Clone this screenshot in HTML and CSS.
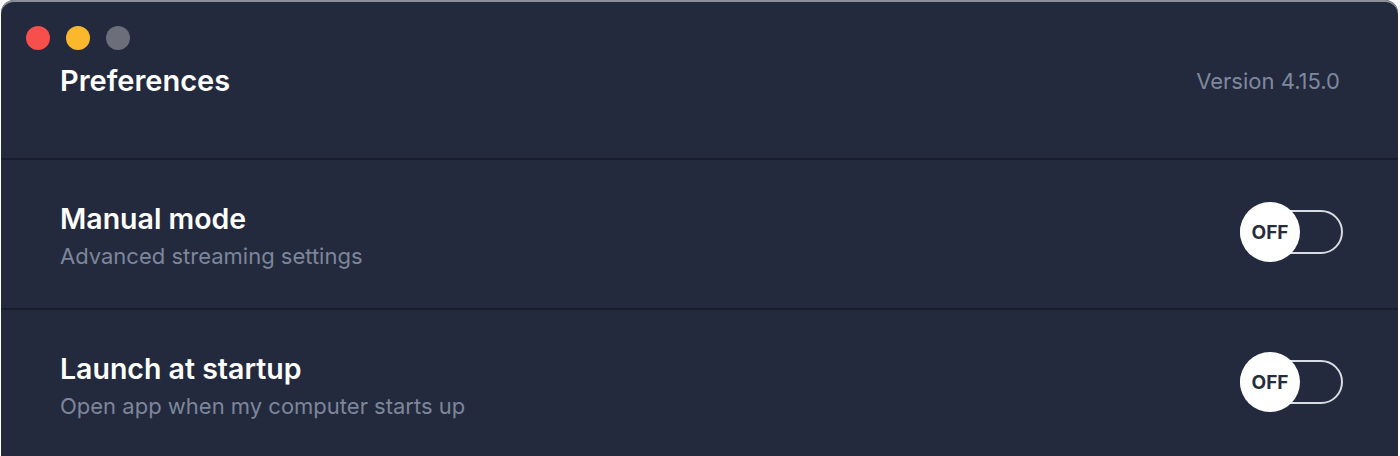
FILE: index.html
```html
<!DOCTYPE html>
<html lang="en">
<head>
<meta charset="utf-8">
<title>Preferences</title>
<link rel="stylesheet" href="styles.css">
</head>
<body>
<div class="window">
  <header class="header">
    <div class="lights">
      <span class="light red"></span>
      <span class="light yellow"></span>
      <span class="light gray"></span>
    </div>
    <div class="header-row">
      <h1 class="title">Preferences</h1>
      <span class="version">Version 4.15.0</span>
    </div>
  </header>
  <section class="row">
    <div class="text">
      <div class="row-title">Manual mode</div>
      <div class="row-sub">Advanced streaming settings</div>
    </div>
    <div class="toggle"><span class="knob">OFF</span></div>
  </section>
  <section class="row">
    <div class="text">
      <div class="row-title">Launch at startup</div>
      <div class="row-sub">Open app when my computer starts up</div>
    </div>
    <div class="toggle"><span class="knob">OFF</span></div>
  </section>
</div>
</body>
</html>
```
FILE: styles.css
```css
html, body {
  margin: 0;
  padding: 0;
  background: #ffffff;
  height: 100%;
  overflow: hidden;
}
body {
  font-family: Inter, "Noto Sans", sans-serif;
  padding: 0 2px 0 1px;
}
.window {
  background: #232a3d;
  border-radius: 13px 13px 0 0;
  box-shadow: inset 0 2px 0 #8c8f97;
  height: 456px;
  overflow: hidden;
}
.header {
  height: 160px;
  box-sizing: border-box;
  padding: 26px 58px 0 25px;
  border-bottom: 2px solid #191e2b;
}
.lights {
  display: flex;
  gap: 16px;
}
.light {
  width: 24px;
  height: 24px;
  border-radius: 50%;
}
.red { background: #f74f4b; }
.yellow { background: #fbb82c; }
.gray { background: #6c6f79; }
.header-row {
  display: flex;
  justify-content: space-between;
  align-items: center;
  margin-top: 13px;
  padding-left: 34px;
}
.title {
  margin: 0;
  font-size: 29px;
  font-weight: 600;
  line-height: 36px;
  color: #ffffff;
}
.version {
  font-size: 22px;
  color: #7f889e;
}
.row {
  height: 150px;
  box-sizing: border-box;
  border-bottom: 2px solid #191e2b;
  display: flex;
  align-items: center;
  justify-content: space-between;
  padding: 0 55px 4px 59px;
}
.text {
  display: flex;
  flex-direction: column;
  gap: 6px;
  padding-top: 6px;
}
.row-title {
  font-size: 28.5px;
  font-weight: 600;
  line-height: 36px;
  color: #ffffff;
}
.row-sub {
  font-size: 22px;
  line-height: 26px;
  color: #7d869b;
}
.toggle {
  width: 103px;
  height: 44px;
  box-sizing: border-box;
  border: 2px solid #d9dce2;
  border-radius: 22px;
  display: flex;
  align-items: center;
}
.knob {
  width: 60px;
  height: 60px;
  flex: none;
  margin-left: -2px;
  border-radius: 50%;
  background: #ffffff;
  color: #262d3d;
  font-size: 19px;
  font-weight: 700;
  display: flex;
  align-items: center;
  justify-content: center;
}
```
